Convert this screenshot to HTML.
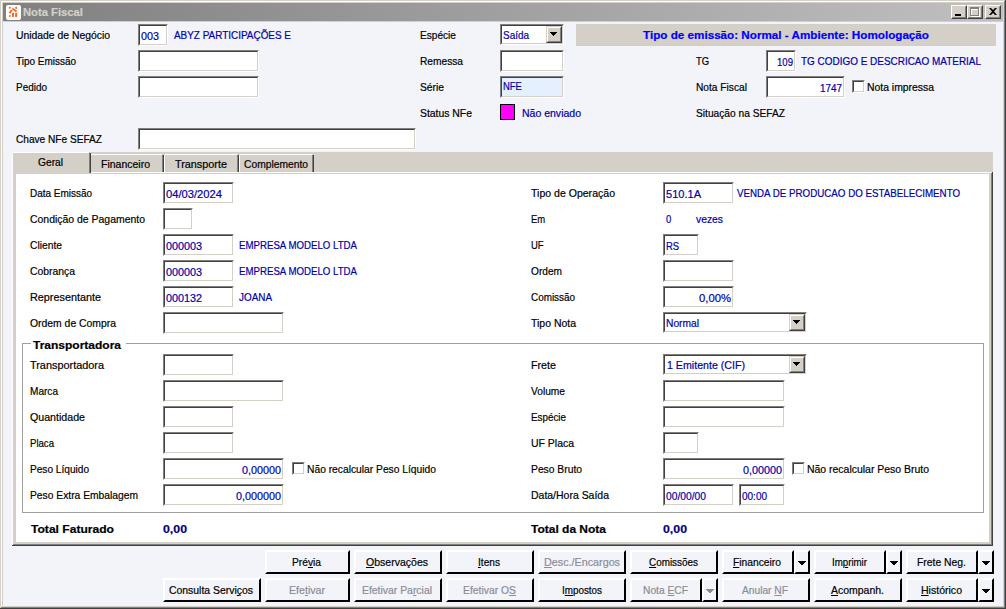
<!DOCTYPE html>
<html lang="pt-BR"><head><meta charset="utf-8"><title>Nota Fiscal</title>
<style>
html,body{margin:0;padding:0;background:#d4d0c8;}
body{width:1006px;height:609px;position:relative;overflow:hidden;font-family:"Liberation Sans", sans-serif;font-size:11px;}
div,svg,span.t{position:absolute;}
span.t{white-space:pre;line-height:13px;height:13px;transform-origin:0 0;-webkit-text-stroke:0.2px currentColor;}
u{text-decoration:underline;text-underline-offset:1px;}
</style></head>
<body>
<div style="left:0px;top:0px;width:1006px;height:609px;background:#d4d0c8"></div>
<div style="left:1005px;top:0px;width:1px;height:609px;background:#404040"></div>
<div style="left:0px;top:608px;width:1006px;height:1px;background:#404040"></div>
<div style="left:1px;top:1px;width:1003px;height:1px;background:#fff"></div>
<div style="left:1px;top:1px;width:1px;height:606px;background:#fff"></div>
<div style="left:1004px;top:1px;width:1px;height:607px;background:#808080"></div>
<div style="left:1px;top:607px;width:1004px;height:1px;background:#808080"></div>
<div style="left:3px;top:3px;width:1000px;height:18px;background:linear-gradient(to right,#808080,#c0c0c0)"></div>
<div style="left:3px;top:22px;width:1000px;height:584px;background:#f2f4f9"></div>
<div style="left:5.5px;top:4.5px;width:15px;height:15px;background:#fff;border-radius:2px"></div>
<svg style="left:5px;top:4px" width="16" height="16" viewBox="0 0 16 16"><g fill="#ff6414" stroke="#ff6414" stroke-width="0"><circle cx="4.8" cy="3.8" r="1"/><circle cx="11.1" cy="3.9" r="1.05"/><path d="M7.3 4.5L11.6 7.5" stroke-width="1.6" fill="none"/><path d="M6.9 6.2L4.4 9.1" stroke-width="1.9" fill="none"/><rect x="4.1" y="11.1" width="1.5" height="1.8"/><rect x="7" y="8.9" width="2" height="4"/><rect x="10.1" y="8.9" width="2" height="4"/></g></svg>
<div style="left:951px;top:5px;width:16px;height:14px;background:#d4d0c8;box-sizing:border-box;border:1px solid;border-color:#fff #404040 #404040 #fff"></div>
<div style="left:952px;top:6px;width:14px;height:12px;box-sizing:border-box;border:1px solid;border-color:#d4d0c8 #808080 #808080 #d4d0c8"></div>
<div style="left:967px;top:5px;width:16px;height:14px;background:#d4d0c8;box-sizing:border-box;border:1px solid;border-color:#fff #404040 #404040 #fff"></div>
<div style="left:968px;top:6px;width:14px;height:12px;box-sizing:border-box;border:1px solid;border-color:#d4d0c8 #808080 #808080 #d4d0c8"></div>
<div style="left:985px;top:5px;width:16px;height:14px;background:#d4d0c8;box-sizing:border-box;border:1px solid;border-color:#fff #404040 #404040 #fff"></div>
<div style="left:986px;top:6px;width:14px;height:12px;box-sizing:border-box;border:1px solid;border-color:#d4d0c8 #808080 #808080 #d4d0c8"></div>
<div style="left:955px;top:14px;width:6px;height:2px;background:#000"></div>
<div style="left:971px;top:8px;width:9px;height:9px;box-sizing:border-box;border:1px solid #fff;border-top-width:2px"></div>
<div style="left:970px;top:7px;width:9px;height:9px;box-sizing:border-box;border:1px solid #808080;border-top-width:2px"></div>
<svg style="left:989px;top:8px" width="8" height="7" viewBox="0 0 8 7"><path d="M0 0h2l2 2 2-2h2l-3 3.5 3 3.5h-2l-2-2-2 2h-2l3-3.5z" fill="#000"/></svg>
<div style="left:138px;top:24px;width:30px;height:22px;background:#fff;box-sizing:border-box;border:1px solid;border-color:#808080 #fff #fff #808080"></div>
<div style="left:139px;top:25px;width:28px;height:20px;box-sizing:border-box;border:1px solid;border-color:#404040 #d4d0c8 #d4d0c8 #404040"></div>
<div style="left:138px;top:50px;width:121px;height:22px;background:#fff;box-sizing:border-box;border:1px solid;border-color:#808080 #fff #fff #808080"></div>
<div style="left:139px;top:51px;width:119px;height:20px;box-sizing:border-box;border:1px solid;border-color:#404040 #d4d0c8 #d4d0c8 #404040"></div>
<div style="left:138px;top:76px;width:121px;height:22px;background:#fff;box-sizing:border-box;border:1px solid;border-color:#808080 #fff #fff #808080"></div>
<div style="left:139px;top:77px;width:119px;height:20px;box-sizing:border-box;border:1px solid;border-color:#404040 #d4d0c8 #d4d0c8 #404040"></div>
<div style="left:138px;top:128px;width:278px;height:22px;background:#fff;box-sizing:border-box;border:1px solid;border-color:#808080 #fff #fff #808080"></div>
<div style="left:139px;top:129px;width:276px;height:20px;box-sizing:border-box;border:1px solid;border-color:#404040 #d4d0c8 #d4d0c8 #404040"></div>
<div style="left:500px;top:24px;width:64px;height:21px;background:#fff;box-sizing:border-box;border:1px solid;border-color:#808080 #fff #fff #808080"></div>
<div style="left:501px;top:25px;width:62px;height:19px;box-sizing:border-box;border:1px solid;border-color:#404040 #d4d0c8 #d4d0c8 #404040"></div>
<div style="left:546px;top:26px;width:16px;height:17px;background:#d4d0c8;box-sizing:border-box;border:1px solid;border-color:#d4d0c8 #404040 #404040 #d4d0c8"></div>
<div style="left:547px;top:27px;width:14px;height:15px;box-sizing:border-box;border:1px solid;border-color:#fff #808080 #808080 #fff"></div>
<div style="left:550px;top:32px;width:7px;height:1px;background:#000"></div>
<div style="left:551px;top:33px;width:5px;height:1px;background:#000"></div>
<div style="left:552px;top:34px;width:3px;height:1px;background:#000"></div>
<div style="left:553px;top:35px;width:1px;height:1px;background:#000"></div>
<div style="left:500px;top:50px;width:64px;height:22px;background:#fff;box-sizing:border-box;border:1px solid;border-color:#808080 #fff #fff #808080"></div>
<div style="left:501px;top:51px;width:62px;height:20px;box-sizing:border-box;border:1px solid;border-color:#404040 #d4d0c8 #d4d0c8 #404040"></div>
<div style="left:500px;top:76px;width:64px;height:22px;background:#e4f0fd;box-sizing:border-box;border:1px solid;border-color:#808080 #fff #fff #808080"></div>
<div style="left:501px;top:77px;width:62px;height:20px;box-sizing:border-box;border:1px solid;border-color:#404040 #d4d0c8 #d4d0c8 #404040"></div>
<div style="left:500px;top:104px;width:15px;height:16px;background:#ff00ff;box-sizing:border-box;border:1px solid #000"></div>
<div style="left:576px;top:24px;width:420px;height:22px;background:#d4d0c8"></div>
<div style="left:766px;top:50px;width:30px;height:22px;background:#fff;box-sizing:border-box;border:1px solid;border-color:#808080 #fff #fff #808080"></div>
<div style="left:767px;top:51px;width:28px;height:20px;box-sizing:border-box;border:1px solid;border-color:#404040 #d4d0c8 #d4d0c8 #404040"></div>
<div style="left:766px;top:76px;width:79px;height:22px;background:#fff;box-sizing:border-box;border:1px solid;border-color:#808080 #fff #fff #808080"></div>
<div style="left:767px;top:77px;width:77px;height:20px;box-sizing:border-box;border:1px solid;border-color:#404040 #d4d0c8 #d4d0c8 #404040"></div>
<div style="left:852px;top:80px;width:13px;height:13px;background:#fff;box-sizing:border-box;border:1px solid;border-color:#808080 #fff #fff #808080"></div>
<div style="left:853px;top:81px;width:11px;height:11px;box-sizing:border-box;border:1px solid;border-color:#404040 #d4d0c8 #d4d0c8 #404040"></div>
<div style="left:12px;top:152px;width:981px;height:394px;background:#d4d0c8"></div>
<div style="left:12px;top:172px;width:1px;height:373px;background:#fff"></div>
<div style="left:91px;top:172px;width:901px;height:1px;background:#fff"></div>
<div style="left:992px;top:172px;width:1px;height:374px;background:#404040"></div>
<div style="left:12px;top:545px;width:981px;height:1px;background:#404040"></div>
<div style="left:991px;top:173px;width:1px;height:372px;background:#808080"></div>
<div style="left:13px;top:544px;width:979px;height:1px;background:#808080"></div>
<div style="left:16px;top:174px;width:973px;height:368px;background:#fff"></div>
<div style="left:12px;top:152px;width:1px;height:21px;background:#fff"></div>
<div style="left:13px;top:152px;width:76px;height:1px;background:#fff"></div>
<div style="left:89px;top:153px;width:1px;height:20px;background:#808080"></div>
<div style="left:90px;top:153px;width:1px;height:20px;background:#404040"></div>
<div style="left:91px;top:154px;width:71px;height:1px;background:#fff"></div>
<div style="left:162px;top:155px;width:1px;height:17px;background:#808080"></div>
<div style="left:163px;top:155px;width:1px;height:17px;background:#404040"></div>
<div style="left:164px;top:155px;width:1px;height:17px;background:#fff"></div>
<div style="left:165px;top:154px;width:72px;height:1px;background:#fff"></div>
<div style="left:237px;top:155px;width:1px;height:17px;background:#808080"></div>
<div style="left:238px;top:155px;width:1px;height:17px;background:#404040"></div>
<div style="left:239px;top:155px;width:1px;height:17px;background:#fff"></div>
<div style="left:240px;top:154px;width:72px;height:1px;background:#fff"></div>
<div style="left:312px;top:155px;width:1px;height:17px;background:#808080"></div>
<div style="left:313px;top:155px;width:1px;height:17px;background:#404040"></div>
<div style="left:163px;top:182px;width:71px;height:22px;background:#fff;box-sizing:border-box;border:1px solid;border-color:#808080 #fff #fff #808080"></div>
<div style="left:164px;top:183px;width:69px;height:20px;box-sizing:border-box;border:1px solid;border-color:#404040 #d4d0c8 #d4d0c8 #404040"></div>
<div style="left:163px;top:208px;width:30px;height:22px;background:#fff;box-sizing:border-box;border:1px solid;border-color:#808080 #fff #fff #808080"></div>
<div style="left:164px;top:209px;width:28px;height:20px;box-sizing:border-box;border:1px solid;border-color:#404040 #d4d0c8 #d4d0c8 #404040"></div>
<div style="left:163px;top:234px;width:71px;height:22px;background:#fff;box-sizing:border-box;border:1px solid;border-color:#808080 #fff #fff #808080"></div>
<div style="left:164px;top:235px;width:69px;height:20px;box-sizing:border-box;border:1px solid;border-color:#404040 #d4d0c8 #d4d0c8 #404040"></div>
<div style="left:163px;top:260px;width:71px;height:22px;background:#fff;box-sizing:border-box;border:1px solid;border-color:#808080 #fff #fff #808080"></div>
<div style="left:164px;top:261px;width:69px;height:20px;box-sizing:border-box;border:1px solid;border-color:#404040 #d4d0c8 #d4d0c8 #404040"></div>
<div style="left:163px;top:286px;width:71px;height:22px;background:#fff;box-sizing:border-box;border:1px solid;border-color:#808080 #fff #fff #808080"></div>
<div style="left:164px;top:287px;width:69px;height:20px;box-sizing:border-box;border:1px solid;border-color:#404040 #d4d0c8 #d4d0c8 #404040"></div>
<div style="left:163px;top:312px;width:121px;height:22px;background:#fff;box-sizing:border-box;border:1px solid;border-color:#808080 #fff #fff #808080"></div>
<div style="left:164px;top:313px;width:119px;height:20px;box-sizing:border-box;border:1px solid;border-color:#404040 #d4d0c8 #d4d0c8 #404040"></div>
<div style="left:663px;top:182px;width:71px;height:22px;background:#fff;box-sizing:border-box;border:1px solid;border-color:#808080 #fff #fff #808080"></div>
<div style="left:664px;top:183px;width:69px;height:20px;box-sizing:border-box;border:1px solid;border-color:#404040 #d4d0c8 #d4d0c8 #404040"></div>
<div style="left:663px;top:234px;width:36px;height:22px;background:#fff;box-sizing:border-box;border:1px solid;border-color:#808080 #fff #fff #808080"></div>
<div style="left:664px;top:235px;width:34px;height:20px;box-sizing:border-box;border:1px solid;border-color:#404040 #d4d0c8 #d4d0c8 #404040"></div>
<div style="left:663px;top:260px;width:71px;height:22px;background:#fff;box-sizing:border-box;border:1px solid;border-color:#808080 #fff #fff #808080"></div>
<div style="left:664px;top:261px;width:69px;height:20px;box-sizing:border-box;border:1px solid;border-color:#404040 #d4d0c8 #d4d0c8 #404040"></div>
<div style="left:663px;top:286px;width:71px;height:22px;background:#fff;box-sizing:border-box;border:1px solid;border-color:#808080 #fff #fff #808080"></div>
<div style="left:664px;top:287px;width:69px;height:20px;box-sizing:border-box;border:1px solid;border-color:#404040 #d4d0c8 #d4d0c8 #404040"></div>
<div style="left:663px;top:312px;width:144px;height:21px;background:#fff;box-sizing:border-box;border:1px solid;border-color:#808080 #fff #fff #808080"></div>
<div style="left:664px;top:313px;width:142px;height:19px;box-sizing:border-box;border:1px solid;border-color:#404040 #d4d0c8 #d4d0c8 #404040"></div>
<div style="left:789px;top:314px;width:16px;height:17px;background:#d4d0c8;box-sizing:border-box;border:1px solid;border-color:#d4d0c8 #404040 #404040 #d4d0c8"></div>
<div style="left:790px;top:315px;width:14px;height:15px;box-sizing:border-box;border:1px solid;border-color:#fff #808080 #808080 #fff"></div>
<div style="left:793px;top:320px;width:7px;height:1px;background:#000"></div>
<div style="left:794px;top:321px;width:5px;height:1px;background:#000"></div>
<div style="left:795px;top:322px;width:3px;height:1px;background:#000"></div>
<div style="left:796px;top:323px;width:1px;height:1px;background:#000"></div>
<div style="left:22px;top:343px;width:962px;height:1px;background:#a0a0a0"></div>
<div style="left:22px;top:343px;width:1px;height:170px;background:#a0a0a0"></div>
<div style="left:983px;top:343px;width:1px;height:170px;background:#a0a0a0"></div>
<div style="left:22px;top:512px;width:962px;height:1px;background:#a0a0a0"></div>
<div style="left:31px;top:343px;width:95px;height:1px;background:#fff"></div>
<div style="left:163px;top:354px;width:71px;height:22px;background:#fff;box-sizing:border-box;border:1px solid;border-color:#808080 #fff #fff #808080"></div>
<div style="left:164px;top:355px;width:69px;height:20px;box-sizing:border-box;border:1px solid;border-color:#404040 #d4d0c8 #d4d0c8 #404040"></div>
<div style="left:163px;top:380px;width:121px;height:22px;background:#fff;box-sizing:border-box;border:1px solid;border-color:#808080 #fff #fff #808080"></div>
<div style="left:164px;top:381px;width:119px;height:20px;box-sizing:border-box;border:1px solid;border-color:#404040 #d4d0c8 #d4d0c8 #404040"></div>
<div style="left:163px;top:406px;width:71px;height:22px;background:#fff;box-sizing:border-box;border:1px solid;border-color:#808080 #fff #fff #808080"></div>
<div style="left:164px;top:407px;width:69px;height:20px;box-sizing:border-box;border:1px solid;border-color:#404040 #d4d0c8 #d4d0c8 #404040"></div>
<div style="left:163px;top:432px;width:71px;height:22px;background:#fff;box-sizing:border-box;border:1px solid;border-color:#808080 #fff #fff #808080"></div>
<div style="left:164px;top:433px;width:69px;height:20px;box-sizing:border-box;border:1px solid;border-color:#404040 #d4d0c8 #d4d0c8 #404040"></div>
<div style="left:163px;top:458px;width:121px;height:22px;background:#fff;box-sizing:border-box;border:1px solid;border-color:#808080 #fff #fff #808080"></div>
<div style="left:164px;top:459px;width:119px;height:20px;box-sizing:border-box;border:1px solid;border-color:#404040 #d4d0c8 #d4d0c8 #404040"></div>
<div style="left:292px;top:462px;width:13px;height:13px;background:#fff;box-sizing:border-box;border:1px solid;border-color:#808080 #fff #fff #808080"></div>
<div style="left:293px;top:463px;width:11px;height:11px;box-sizing:border-box;border:1px solid;border-color:#404040 #d4d0c8 #d4d0c8 #404040"></div>
<div style="left:163px;top:484px;width:121px;height:22px;background:#fff;box-sizing:border-box;border:1px solid;border-color:#808080 #fff #fff #808080"></div>
<div style="left:164px;top:485px;width:119px;height:20px;box-sizing:border-box;border:1px solid;border-color:#404040 #d4d0c8 #d4d0c8 #404040"></div>
<div style="left:663px;top:354px;width:144px;height:21px;background:#fff;box-sizing:border-box;border:1px solid;border-color:#808080 #fff #fff #808080"></div>
<div style="left:664px;top:355px;width:142px;height:19px;box-sizing:border-box;border:1px solid;border-color:#404040 #d4d0c8 #d4d0c8 #404040"></div>
<div style="left:789px;top:356px;width:16px;height:17px;background:#d4d0c8;box-sizing:border-box;border:1px solid;border-color:#d4d0c8 #404040 #404040 #d4d0c8"></div>
<div style="left:790px;top:357px;width:14px;height:15px;box-sizing:border-box;border:1px solid;border-color:#fff #808080 #808080 #fff"></div>
<div style="left:793px;top:362px;width:7px;height:1px;background:#000"></div>
<div style="left:794px;top:363px;width:5px;height:1px;background:#000"></div>
<div style="left:795px;top:364px;width:3px;height:1px;background:#000"></div>
<div style="left:796px;top:365px;width:1px;height:1px;background:#000"></div>
<div style="left:663px;top:380px;width:122px;height:22px;background:#fff;box-sizing:border-box;border:1px solid;border-color:#808080 #fff #fff #808080"></div>
<div style="left:664px;top:381px;width:120px;height:20px;box-sizing:border-box;border:1px solid;border-color:#404040 #d4d0c8 #d4d0c8 #404040"></div>
<div style="left:663px;top:406px;width:122px;height:22px;background:#fff;box-sizing:border-box;border:1px solid;border-color:#808080 #fff #fff #808080"></div>
<div style="left:664px;top:407px;width:120px;height:20px;box-sizing:border-box;border:1px solid;border-color:#404040 #d4d0c8 #d4d0c8 #404040"></div>
<div style="left:663px;top:432px;width:36px;height:22px;background:#fff;box-sizing:border-box;border:1px solid;border-color:#808080 #fff #fff #808080"></div>
<div style="left:664px;top:433px;width:34px;height:20px;box-sizing:border-box;border:1px solid;border-color:#404040 #d4d0c8 #d4d0c8 #404040"></div>
<div style="left:663px;top:458px;width:122px;height:22px;background:#fff;box-sizing:border-box;border:1px solid;border-color:#808080 #fff #fff #808080"></div>
<div style="left:664px;top:459px;width:120px;height:20px;box-sizing:border-box;border:1px solid;border-color:#404040 #d4d0c8 #d4d0c8 #404040"></div>
<div style="left:792px;top:462px;width:13px;height:13px;background:#fff;box-sizing:border-box;border:1px solid;border-color:#808080 #fff #fff #808080"></div>
<div style="left:793px;top:463px;width:11px;height:11px;box-sizing:border-box;border:1px solid;border-color:#404040 #d4d0c8 #d4d0c8 #404040"></div>
<div style="left:663px;top:484px;width:71px;height:22px;background:#fff;box-sizing:border-box;border:1px solid;border-color:#808080 #fff #fff #808080"></div>
<div style="left:664px;top:485px;width:69px;height:20px;box-sizing:border-box;border:1px solid;border-color:#404040 #d4d0c8 #d4d0c8 #404040"></div>
<div style="left:739px;top:484px;width:46px;height:22px;background:#fff;box-sizing:border-box;border:1px solid;border-color:#808080 #fff #fff #808080"></div>
<div style="left:740px;top:485px;width:44px;height:20px;box-sizing:border-box;border:1px solid;border-color:#404040 #d4d0c8 #d4d0c8 #404040"></div>
<div style="left:265px;top:550px;width:85px;height:24px;background:#f2f4f9;box-sizing:border-box;border:2px solid;border-color:#fff #000 #000 #fff"></div>
<div style="left:354px;top:550px;width:88px;height:24px;background:#f2f4f9;box-sizing:border-box;border:2px solid;border-color:#fff #000 #000 #fff"></div>
<div style="left:446px;top:550px;width:88px;height:24px;background:#f2f4f9;box-sizing:border-box;border:2px solid;border-color:#fff #000 #000 #fff"></div>
<div style="left:538px;top:550px;width:88px;height:24px;background:#f2f4f9;box-sizing:border-box;border:2px solid;border-color:#fff #000 #000 #fff"></div>
<div style="left:630px;top:550px;width:88px;height:24px;background:#f2f4f9;box-sizing:border-box;border:2px solid;border-color:#fff #000 #000 #fff"></div>
<div style="left:722px;top:550px;width:72px;height:24px;background:#f2f4f9;box-sizing:border-box;border:2px solid;border-color:#fff #000 #000 #fff"></div>
<div style="left:794px;top:550px;width:16px;height:24px;background:#f2f4f9;box-sizing:border-box;border:2px solid;border-color:#fff #000 #000 #fff"></div>
<div style="left:798px;top:561px;width:8px;height:1px;background:#000"></div>
<div style="left:799px;top:562px;width:6px;height:1px;background:#000"></div>
<div style="left:800px;top:563px;width:4px;height:1px;background:#000"></div>
<div style="left:801px;top:564px;width:2px;height:1px;background:#000"></div>
<div style="left:814px;top:550px;width:72px;height:24px;background:#f2f4f9;box-sizing:border-box;border:2px solid;border-color:#fff #000 #000 #fff"></div>
<div style="left:886px;top:550px;width:16px;height:24px;background:#f2f4f9;box-sizing:border-box;border:2px solid;border-color:#fff #000 #000 #fff"></div>
<div style="left:890px;top:561px;width:8px;height:1px;background:#000"></div>
<div style="left:891px;top:562px;width:6px;height:1px;background:#000"></div>
<div style="left:892px;top:563px;width:4px;height:1px;background:#000"></div>
<div style="left:893px;top:564px;width:2px;height:1px;background:#000"></div>
<div style="left:906px;top:550px;width:72px;height:24px;background:#f2f4f9;box-sizing:border-box;border:2px solid;border-color:#fff #000 #000 #fff"></div>
<div style="left:978px;top:550px;width:16px;height:24px;background:#f2f4f9;box-sizing:border-box;border:2px solid;border-color:#fff #000 #000 #fff"></div>
<div style="left:982px;top:561px;width:8px;height:1px;background:#000"></div>
<div style="left:983px;top:562px;width:6px;height:1px;background:#000"></div>
<div style="left:984px;top:563px;width:4px;height:1px;background:#000"></div>
<div style="left:985px;top:564px;width:2px;height:1px;background:#000"></div>
<div style="left:163px;top:578px;width:98px;height:24px;background:#f2f4f9;box-sizing:border-box;border:2px solid;border-color:#fff #000 #000 #fff"></div>
<div style="left:265px;top:578px;width:85px;height:24px;background:#f2f4f9;box-sizing:border-box;border:2px solid;border-color:#fff #000 #000 #fff"></div>
<div style="left:354px;top:578px;width:88px;height:24px;background:#f2f4f9;box-sizing:border-box;border:2px solid;border-color:#fff #000 #000 #fff"></div>
<div style="left:446px;top:578px;width:88px;height:24px;background:#f2f4f9;box-sizing:border-box;border:2px solid;border-color:#fff #000 #000 #fff"></div>
<div style="left:538px;top:578px;width:88px;height:24px;background:#f2f4f9;box-sizing:border-box;border:2px solid;border-color:#fff #000 #000 #fff"></div>
<div style="left:630px;top:578px;width:72px;height:24px;background:#f2f4f9;box-sizing:border-box;border:2px solid;border-color:#fff #000 #000 #fff"></div>
<div style="left:702px;top:578px;width:16px;height:24px;background:#f2f4f9;box-sizing:border-box;border:2px solid;border-color:#fff #000 #000 #fff"></div>
<div style="left:706px;top:589px;width:8px;height:1px;background:#8c8c96"></div>
<div style="left:707px;top:590px;width:6px;height:1px;background:#8c8c96"></div>
<div style="left:708px;top:591px;width:4px;height:1px;background:#8c8c96"></div>
<div style="left:709px;top:592px;width:2px;height:1px;background:#8c8c96"></div>
<div style="left:722px;top:578px;width:88px;height:24px;background:#f2f4f9;box-sizing:border-box;border:2px solid;border-color:#fff #000 #000 #fff"></div>
<div style="left:814px;top:578px;width:88px;height:24px;background:#f2f4f9;box-sizing:border-box;border:2px solid;border-color:#fff #000 #000 #fff"></div>
<div style="left:906px;top:578px;width:72px;height:24px;background:#f2f4f9;box-sizing:border-box;border:2px solid;border-color:#fff #000 #000 #fff"></div>
<div style="left:978px;top:578px;width:16px;height:24px;background:#f2f4f9;box-sizing:border-box;border:2px solid;border-color:#fff #000 #000 #fff"></div>
<div style="left:982px;top:589px;width:8px;height:1px;background:#000"></div>
<div style="left:983px;top:590px;width:6px;height:1px;background:#000"></div>
<div style="left:984px;top:591px;width:4px;height:1px;background:#000"></div>
<div style="left:985px;top:592px;width:2px;height:1px;background:#000"></div>
<span class="t" style="left:23px;top:6px;color:#d4d0c8;font-weight:bold;transform:scaleX(1.0224);">Nota Fiscal</span>
<span class="t" style="left:16px;top:29px;color:#000;transform:scaleX(0.9429);">Unidade de Negócio</span>
<span class="t" style="left:141px;top:30px;color:#0000a8;transform:scaleX(0.9804);">003</span>
<span class="t" style="left:174px;top:29px;color:#0000a8;transform:scaleX(0.9028);">ABYZ PARTICIPAÇÕES E</span>
<span class="t" style="left:16px;top:55px;color:#000;transform:scaleX(0.9059);">Tipo Emissão</span>
<span class="t" style="left:16px;top:81px;color:#000;transform:scaleX(0.9047);">Pedido</span>
<span class="t" style="left:16px;top:133px;color:#000;transform:scaleX(0.9193);">Chave NFe SEFAZ</span>
<span class="t" style="left:420px;top:29px;color:#000;transform:scaleX(0.9198);">Espécie</span>
<span class="t" style="left:503px;top:29px;color:#0000a8;transform:scaleX(0.9043);">Saída</span>
<span class="t" style="left:420px;top:55px;color:#000;transform:scaleX(0.9254);">Remessa</span>
<span class="t" style="left:420px;top:81px;color:#000;transform:scaleX(0.9343);">Série</span>
<span class="t" style="left:503px;top:80px;color:#0000a8;transform:scaleX(0.8600);">NFE</span>
<span class="t" style="left:420px;top:107px;color:#000;transform:scaleX(0.9449);">Status NFe</span>
<span class="t" style="left:522px;top:107px;color:#0000a8;transform:scaleX(0.9550);">Não enviado</span>
<span class="t" style="left:643px;top:29px;color:#0000ff;font-weight:bold;transform:scaleX(1.0610);">Tipo de emissão: Normal - Ambiente: Homologação</span>
<span class="t" style="left:696px;top:55px;color:#000;transform:scaleX(0.8600);">TG</span>
<span class="t" style="left:777px;top:56px;color:#0000a8;transform:scaleX(0.8715);">109</span>
<span class="t" style="left:801px;top:55px;color:#0000a8;transform:scaleX(0.9043);">TG CODIGO E DESCRICAO MATERIAL</span>
<span class="t" style="left:696px;top:81px;color:#000;transform:scaleX(0.9267);">Nota Fiscal</span>
<span class="t" style="left:820px;top:82px;color:#0000a8;transform:scaleX(0.8985);">1747</span>
<span class="t" style="left:867px;top:81px;color:#000;transform:scaleX(0.9447);">Nota impressa</span>
<span class="t" style="left:696px;top:107px;color:#000;transform:scaleX(0.9271);">Situação na SEFAZ</span>
<span class="t" style="left:38px;top:156px;color:#000;transform:scaleX(0.9292);">Geral</span>
<span class="t" style="left:101px;top:158px;color:#000;transform:scaleX(0.9541);">Financeiro</span>
<span class="t" style="left:175px;top:158px;color:#000;transform:scaleX(0.9849);">Transporte</span>
<span class="t" style="left:244px;top:158px;color:#000;transform:scaleX(0.9345);">Complemento</span>
<span class="t" style="left:30px;top:187px;color:#000;transform:scaleX(0.9053);">Data Emissão</span>
<span class="t" style="left:166px;top:188px;color:#0000a8;transform:scaleX(1.0170);">04/03/2024</span>
<span class="t" style="left:30px;top:213px;color:#000;transform:scaleX(0.9497);">Condição de Pagamento</span>
<span class="t" style="left:30px;top:239px;color:#000;transform:scaleX(0.9343);">Cliente</span>
<span class="t" style="left:166px;top:240px;color:#0000a8;transform:scaleX(0.9804);">000003</span>
<span class="t" style="left:239px;top:239px;color:#0000a8;transform:scaleX(0.8788);">EMPRESA MODELO LTDA</span>
<span class="t" style="left:30px;top:265px;color:#000;transform:scaleX(0.9433);">Cobrança</span>
<span class="t" style="left:166px;top:266px;color:#0000a8;transform:scaleX(0.9804);">000003</span>
<span class="t" style="left:239px;top:265px;color:#0000a8;transform:scaleX(0.8788);">EMPRESA MODELO LTDA</span>
<span class="t" style="left:30px;top:291px;color:#000;transform:scaleX(0.9838);">Representante</span>
<span class="t" style="left:166px;top:292px;color:#0000a8;transform:scaleX(0.9804);">000132</span>
<span class="t" style="left:239px;top:291px;color:#0000a8;transform:scaleX(0.8995);">JOANA</span>
<span class="t" style="left:30px;top:317px;color:#000;transform:scaleX(0.9441);">Ordem de Compra</span>
<span class="t" style="left:531px;top:187px;color:#000;transform:scaleX(0.9583);">Tipo de Operação</span>
<span class="t" style="left:666px;top:188px;color:#0000a8;transform:scaleX(1.0036);">510.1A</span>
<span class="t" style="left:737px;top:187px;color:#0000a8;transform:scaleX(0.8870);">VENDA DE PRODUCAO DO ESTABELECIMENTO</span>
<span class="t" style="left:531px;top:213px;color:#000;transform:scaleX(0.8600);">Em</span>
<span class="t" style="left:666px;top:213px;color:#0000a8;transform:scaleX(0.8600);">0</span>
<span class="t" style="left:696px;top:213px;color:#0000a8;transform:scaleX(0.9391);">vezes</span>
<span class="t" style="left:531px;top:239px;color:#000;transform:scaleX(0.8600);">UF</span>
<span class="t" style="left:666px;top:240px;color:#0000a8;transform:scaleX(0.8600);">RS</span>
<span class="t" style="left:531px;top:265px;color:#000;transform:scaleX(0.9219);">Ordem</span>
<span class="t" style="left:531px;top:291px;color:#000;transform:scaleX(0.8997);">Comissão</span>
<span class="t" style="left:699px;top:292px;color:#0000a8;transform:scaleX(1.0255);">0,00%</span>
<span class="t" style="left:531px;top:317px;color:#000;transform:scaleX(0.9514);">Tipo Nota</span>
<span class="t" style="left:666px;top:317px;color:#0000a8;transform:scaleX(0.9308);">Normal</span>
<span class="t" style="left:33px;top:339px;color:#000;font-weight:bold;transform:scaleX(1.0906);">Transportadora</span>
<span class="t" style="left:30px;top:359px;color:#000;transform:scaleX(0.9891);">Transportadora</span>
<span class="t" style="left:30px;top:385px;color:#000;transform:scaleX(0.9162);">Marca</span>
<span class="t" style="left:30px;top:411px;color:#000;transform:scaleX(0.9668);">Quantidade</span>
<span class="t" style="left:30px;top:437px;color:#000;transform:scaleX(0.8717);">Placa</span>
<span class="t" style="left:30px;top:463px;color:#000;transform:scaleX(0.9187);">Peso Líquido</span>
<span class="t" style="left:242px;top:464px;color:#0000a8;transform:scaleX(0.9807);">0,00000</span>
<span class="t" style="left:307px;top:463px;color:#000;transform:scaleX(0.9334);">Não recalcular Peso Líquido</span>
<span class="t" style="left:30px;top:489px;color:#000;transform:scaleX(0.9346);">Peso Extra Embalagem</span>
<span class="t" style="left:236px;top:490px;color:#0000a8;transform:scaleX(0.9806);">0,000000</span>
<span class="t" style="left:531px;top:359px;color:#000;transform:scaleX(0.9732);">Frete</span>
<span class="t" style="left:667px;top:359px;color:#0000a8;transform:scaleX(0.9667);">1 Emitente (CIF)</span>
<span class="t" style="left:531px;top:385px;color:#000;transform:scaleX(0.9264);">Volume</span>
<span class="t" style="left:531px;top:411px;color:#000;transform:scaleX(0.8942);">Espécie</span>
<span class="t" style="left:531px;top:437px;color:#000;transform:scaleX(0.9503);">UF Placa</span>
<span class="t" style="left:531px;top:463px;color:#000;transform:scaleX(0.9371);">Peso Bruto</span>
<span class="t" style="left:743px;top:464px;color:#0000a8;transform:scaleX(0.9807);">0,00000</span>
<span class="t" style="left:807px;top:463px;color:#000;transform:scaleX(0.9501);">Não recalcular Peso Bruto</span>
<span class="t" style="left:531px;top:489px;color:#000;transform:scaleX(0.9519);">Data/Hora Saída</span>
<span class="t" style="left:666px;top:490px;color:#0000a8;transform:scaleX(0.9340);">00/00/00</span>
<span class="t" style="left:742px;top:490px;color:#0000a8;transform:scaleX(0.9081);">00:00</span>
<span class="t" style="left:31px;top:523px;color:#000;font-weight:bold;transform:scaleX(1.0982);">Total Faturado</span>
<span class="t" style="left:163px;top:523px;color:#000080;font-weight:bold;transform:scaleX(1.1200);">0,00</span>
<span class="t" style="left:531px;top:523px;color:#000;font-weight:bold;transform:scaleX(1.0892);">Total da Nota</span>
<span class="t" style="left:663px;top:523px;color:#000080;font-weight:bold;transform:scaleX(1.1200);">0,00</span>
<span class="t" style="left:292px;top:556px;color:#000;transform:scaleX(0.9299);">Pré<u>v</u>ia</span>
<span class="t" style="left:366px;top:556px;color:#000;transform:scaleX(0.9564);"><u>O</u>bservações</span>
<span class="t" style="left:478px;top:556px;color:#000;transform:scaleX(0.9221);"><u>I</u>tens</span>
<span class="t" style="left:544px;top:556px;color:#8c8c96;transform:scaleX(0.9787);"><u>D</u>esc./Encargos</span>
<span class="t" style="left:649px;top:556px;color:#000;transform:scaleX(0.9004);"><u>C</u>omissões</span>
<span class="t" style="left:733px;top:556px;color:#000;transform:scaleX(0.9343);"><u>F</u>inanceiro</span>
<span class="t" style="left:832px;top:556px;color:#000;transform:scaleX(0.8805);">Im<u>p</u>rimir</span>
<span class="t" style="left:917px;top:556px;color:#000;transform:scaleX(0.9426);">Frete Ne<u>g</u>.</span>
<span class="t" style="left:169px;top:584px;color:#000;transform:scaleX(0.9473);">Consulta Servi<u>ç</u>os</span>
<span class="t" style="left:289px;top:584px;color:#8c8c96;transform:scaleX(0.9648);">Efe<u>t</u>ivar</span>
<span class="t" style="left:362px;top:584px;color:#8c8c96;transform:scaleX(0.9459);">Efetivar Pa<u>r</u>cial</span>
<span class="t" style="left:463px;top:584px;color:#8c8c96;transform:scaleX(0.9422);">Efetivar O<u>S</u></span>
<span class="t" style="left:562px;top:584px;color:#000;transform:scaleX(0.8957);">I<u>m</u>postos</span>
<span class="t" style="left:643px;top:584px;color:#8c8c96;transform:scaleX(0.9314);">Nota <u>E</u>CF</span>
<span class="t" style="left:742px;top:584px;color:#8c8c96;transform:scaleX(0.9284);">Anular <u>N</u>F</span>
<span class="t" style="left:831px;top:584px;color:#000;transform:scaleX(0.9523);"><u>A</u>companh.</span>
<span class="t" style="left:921px;top:584px;color:#000;transform:scaleX(0.9580);"><u>H</u>istórico</span>
</body></html>
